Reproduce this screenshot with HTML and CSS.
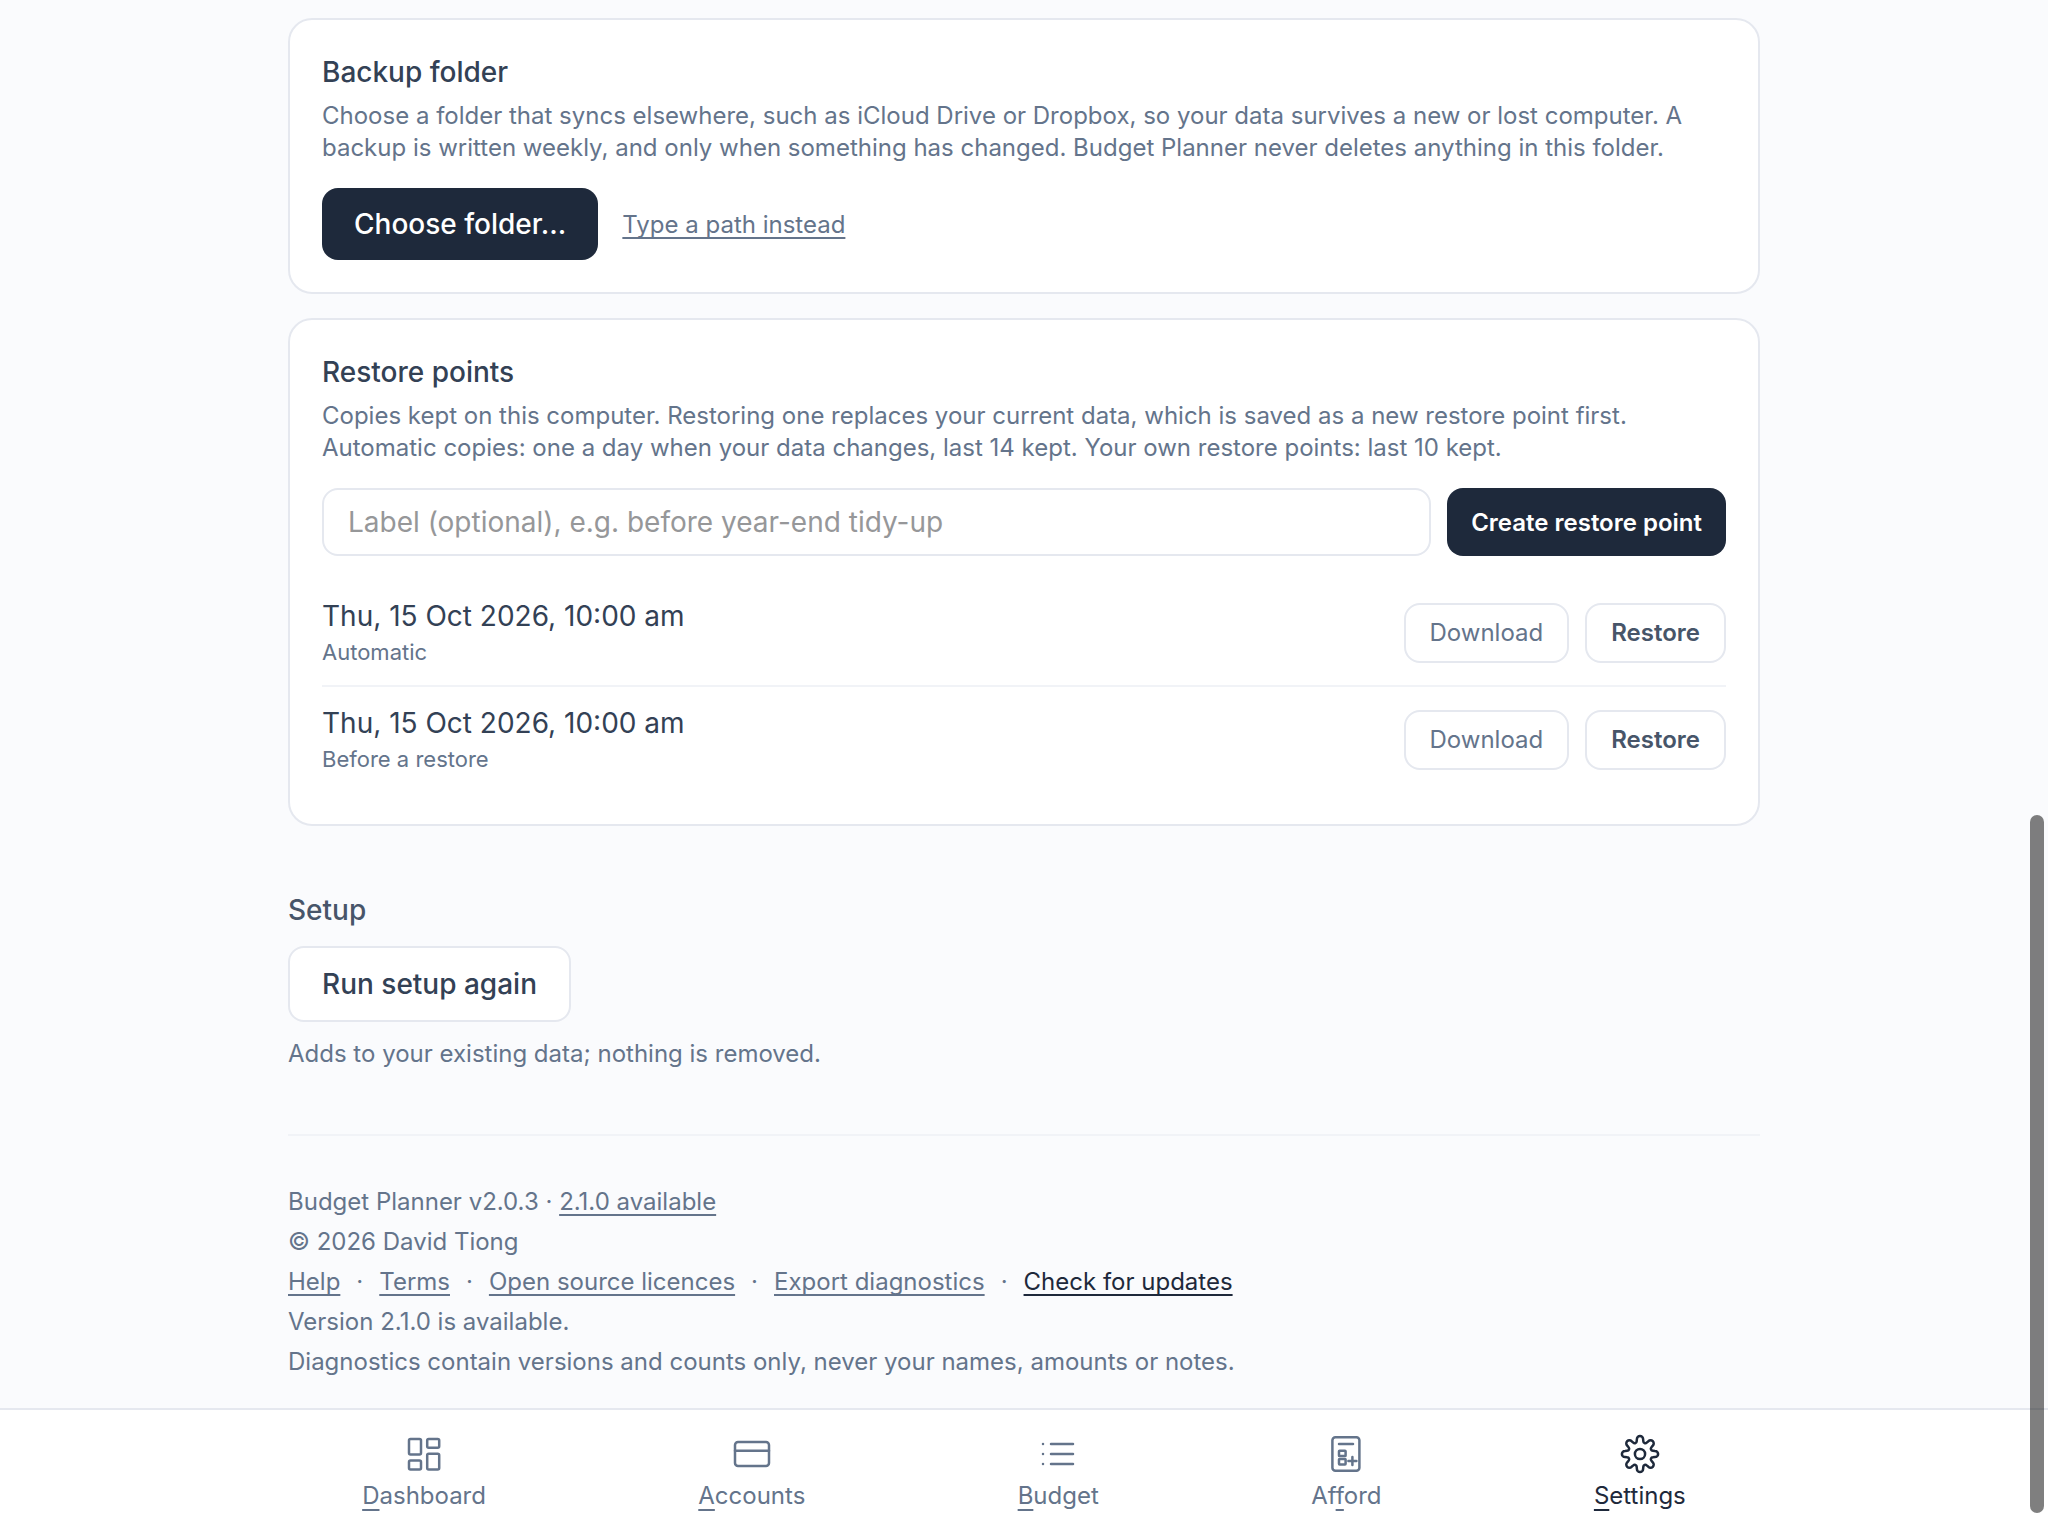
FILE: index.html
```html
<!DOCTYPE html>
<html lang="en">
<head>
  <meta charset="UTF-8">
  <meta name="viewport" content="width=device-width, initial-scale=1.0">
  <title>Settings - Budget Planner</title>
  <link rel="stylesheet" href="styles.css">
</head>
<body>
  <main class="page">
    <section class="card">
      <h2>Backup folder</h2>
      <p class="hint">Choose a folder that syncs elsewhere, such as iCloud Drive or Dropbox, so your data survives a new or lost computer. A backup is written weekly, and only when something has changed. Budget Planner never deletes anything in this folder.</p>
      <div class="folder-actions">
        <button type="button" class="btn btn-primary">Choose folder…</button>
        <button type="button" class="link-btn">Type a path instead</button>
      </div>
    </section>

    <section class="card">
      <h2>Restore points</h2>
      <p class="hint">Copies kept on this computer. Restoring one replaces your current data, which is saved as a new restore point first. Automatic copies: one a day when your data changes, last 14 kept. Your own restore points: last 10 kept.</p>
      <form class="create-form">
        <input type="text" class="label-input" aria-label="Restore point label" placeholder="Label (optional), e.g. before year-end tidy-up">
        <button type="button" class="btn btn-primary btn-create">Create restore point</button>
      </form>
      <ul class="points">
        <li class="point">
          <div class="point-info">
            <div class="point-date">Thu, 15 Oct 2026, 10:00 am</div>
            <div class="point-kind">Automatic</div>
          </div>
          <button type="button" class="btn btn-small">Download</button>
          <button type="button" class="btn btn-small btn-restore">Restore</button>
        </li>
        <li class="point">
          <div class="point-info">
            <div class="point-date">Thu, 15 Oct 2026, 10:00 am</div>
            <div class="point-kind">Before a restore</div>
          </div>
          <button type="button" class="btn btn-small">Download</button>
          <button type="button" class="btn btn-small btn-restore">Restore</button>
        </li>
      </ul>
    </section>

    <section class="setup">
      <h2>Setup</h2>
      <button type="button" class="btn btn-outline">Run setup again</button>
      <p class="hint">Adds to your existing data; nothing is removed.</p>
    </section>

    <footer class="about">
      <p>Budget Planner v2.0.3 · <a href="#update">2.1.0 available</a></p>
      <p>© 2026 David Tiong</p>
      <div class="about-links">
        <a href="#help">Help</a>
        <span>·</span>
        <a href="#terms">Terms</a>
        <span>·</span>
        <a href="#licences">Open source licences</a>
        <span>·</span>
        <button type="button" class="link-btn">Export diagnostics</button>
        <span>·</span>
        <button type="button" class="link-btn link-dark">Check for updates</button>
      </div>
      <p>Version 2.1.0 is available.</p>
      <p>Diagnostics contain versions and counts only, never your names, amounts or notes.</p>
    </footer>
  </main>

  <nav class="tabbar">
    <div class="tabs">
      <a class="tab" href="#dashboard">
        <svg class="icon" viewBox="0 0 44 44" aria-hidden="true">
          <rect x="7" y="7" width="12" height="15.6" rx="1.5"/>
          <rect x="25.2" y="7" width="12" height="8.8" rx="1.5"/>
          <rect x="7" y="28.6" width="12" height="8.8" rx="1.5"/>
          <rect x="25.2" y="21.8" width="12" height="15.6" rx="1.5"/>
        </svg>
        <span><u>D</u>ashboard</span>
      </a>
      <a class="tab" href="#accounts">
        <svg class="icon" viewBox="0 0 44 44" aria-hidden="true">
          <rect x="5" y="10" width="34" height="24" rx="3"/>
          <path d="M5 18.8h34"/>
        </svg>
        <span><u>A</u>ccounts</span>
      </a>
      <a class="tab" href="#budget">
        <svg class="icon" viewBox="0 0 44 44" aria-hidden="true">
          <path d="M15 12h22M15 22h22M15 32h22"/>
          <path d="M7 12h.01M7 22h.01M7 32h.01"/>
        </svg>
        <span><u>B</u>udget</span>
      </a>
      <a class="tab" href="#afford">
        <svg class="icon" viewBox="0 0 44 44" aria-hidden="true">
          <rect x="8.4" y="5.2" width="27" height="33.6" rx="3"/>
          <path d="M15 12h14M28.4 25v8M24.4 29h8"/>
          <rect x="15" y="18.7" width="6.6" height="5.4" rx=".6"/>
          <rect x="15" y="27" width="6.6" height="5.4" rx=".6"/>
        </svg>
        <span>Af<u>f</u>ord</span>
      </a>
      <a class="tab active" href="#settings" aria-current="page">
        <svg class="icon" viewBox="0 0 44 44" aria-hidden="true">
          <circle cx="22" cy="22" r="5.1"/>
          <path d="M18.9 7A3.1 3.1 0 0 1 25.1 7L25.3 9.2A2 2 0 0 0 28.7 10.6L30.4 9.2A3.1 3.1 0 0 1 34.8 13.6L33.4 15.3A2 2 0 0 0 34.8 18.7L37 18.9A3.1 3.1 0 0 1 37 25.1L34.8 25.3A2 2 0 0 0 33.4 28.7L34.8 30.4A3.1 3.1 0 0 1 30.4 34.8L28.7 33.4A2 2 0 0 0 25.3 34.8L25.1 37A3.1 3.1 0 0 1 18.9 37L18.7 34.8A2 2 0 0 0 15.3 33.4L13.6 34.8A3.1 3.1 0 0 1 9.2 30.4L10.6 28.7A2 2 0 0 0 9.2 25.3L7 25.1A3.1 3.1 0 0 1 7 18.9L9.2 18.7A2 2 0 0 0 10.6 15.3L9.2 13.6A3.1 3.1 0 0 1 13.6 9.2L15.3 10.6A2 2 0 0 0 18.7 9.2Z"/>
        </svg>
        <span><u>S</u>ettings</span>
      </a>
    </div>
  </nav>
  <div class="scroll-thumb"></div>
</body>
</html>
```

FILE: styles.css
```css
* {
  box-sizing: border-box;
}

body {
  margin: 0;
  min-height: 100vh;
  display: flex;
  flex-direction: column;
  background-color: #fafbfd;
  font-family: Inter, "Liberation Sans", sans-serif;
  font-size: 24px;
  line-height: 32px;
  color: #64748b;
}

h2, p, ul {
  margin: 0;
  padding: 0;
}

h2 {
  font-size: 28px;
  line-height: 40px;
  font-weight: 500;
  color: #334155;
}

button, input {
  font-family: inherit;
}

.page {
  flex: 1;
  width: 100%;
  max-width: 1536px;
  margin: 0 auto;
  padding: 18px 32px 0;
}

.card {
  background-color: #fff;
  border: 2px solid #e5e8ef;
  border-radius: 24px;
  padding: 32px;
  margin-bottom: 24px;
}

.card .hint {
  margin-top: 8px;
}

/* buttons */
.btn {
  border: 2px solid #e5e8ef;
  border-radius: 16px;
  background-color: #fff;
  font-weight: 500;
  cursor: pointer;
}

.btn-primary {
  border: none;
  background-color: #1e293b;
  color: #fff;
  height: 72px;
  padding: 0 32px;
  font-size: 28px;
}

.btn-create {
  height: 68px;
  padding: 0 24px;
  font-size: 24px;
  font-weight: 600;
}

.btn-small {
  height: 60px;
  padding: 0 24px;
  font-size: 24px;
  font-weight: 400;
  color: #64748b;
}

.btn-restore {
  font-weight: 600;
  color: #475569;
}

.btn-outline {
  height: 76px;
  padding: 0 32px;
  font-size: 28px;
  color: #334155;
}

.link-btn {
  border: none;
  background: none;
  padding: 0;
  font-size: 24px;
  color: inherit;
  cursor: pointer;
}

a, .link-btn {
  color: inherit;
  text-decoration: underline;
  text-decoration-thickness: 2px;
  text-decoration-skip-ink: none;
  text-underline-offset: 4px;
}

.folder-actions {
  display: flex;
  align-items: center;
  gap: 24px;
  margin-top: 24px;
}

/* restore points */
.create-form {
  display: flex;
  gap: 16px;
  margin: 24px 0;
}

.label-input {
  flex: 1;
  min-width: 0;
  height: 68px;
  padding: 0 24px;
  border: 2px solid #e5e8ef;
  border-radius: 16px;
  background-color: #fff;
  font-size: 28px;
  color: #334155;
}

.label-input::placeholder {
  color: #969799;
  opacity: 1;
}

.points {
  list-style: none;
}

.point {
  display: flex;
  align-items: center;
  gap: 16px;
  padding: 16px 0;
}

.point + .point {
  border-top: 2px solid #f1f3f7;
}

.point-info {
  flex: 1;
}

.point-date {
  font-size: 28px;
  line-height: 40px;
  color: #334155;
}

.point-kind {
  font-size: 22px;
  line-height: 33px;
}

/* setup */
.setup {
  padding: 40px 0 64px;
}

.setup h2 {
  color: #475569;
}

.setup .btn {
  display: block;
  margin: 16px 0;
}

/* footer */
.about {
  border-top: 2px solid #f1f3f7;
  padding: 46px 0 24px;
  line-height: 40px;
}

.about-links {
  display: flex;
  flex-wrap: wrap;
  gap: 0 16px;
}

.about-links .link-btn {
  line-height: 40px;
}

.link-btn.link-dark {
  color: #1e293b;
}

/* bottom tabs */
.tabbar {
  background-color: #fff;
  border-top: 2px solid #e5e8ef;
}

.tabs {
  display: flex;
  justify-content: space-around;
  max-width: 1536px;
  margin: 0 auto;
  padding: 22px 0 24px;
}

.tab {
  display: flex;
  flex-direction: column;
  align-items: center;
  gap: 4px;
  text-decoration: none;
}

.tab u {
  text-decoration-thickness: 2px;
  text-underline-offset: 5px;
}

.tab.active {
  color: #1e293b;
}

.icon {
  width: 44px;
  height: 44px;
  fill: none;
  stroke: currentColor;
  stroke-width: 2.5;
  stroke-linecap: round;
  stroke-linejoin: round;
}

/* overlay scrollbar */
.scroll-thumb {
  position: fixed;
  top: 815px;
  right: 4px;
  bottom: 23px;
  width: 14px;
  border-radius: 7px;
  background-color: rgba(0, 0, 0, 0.5);
}
```
